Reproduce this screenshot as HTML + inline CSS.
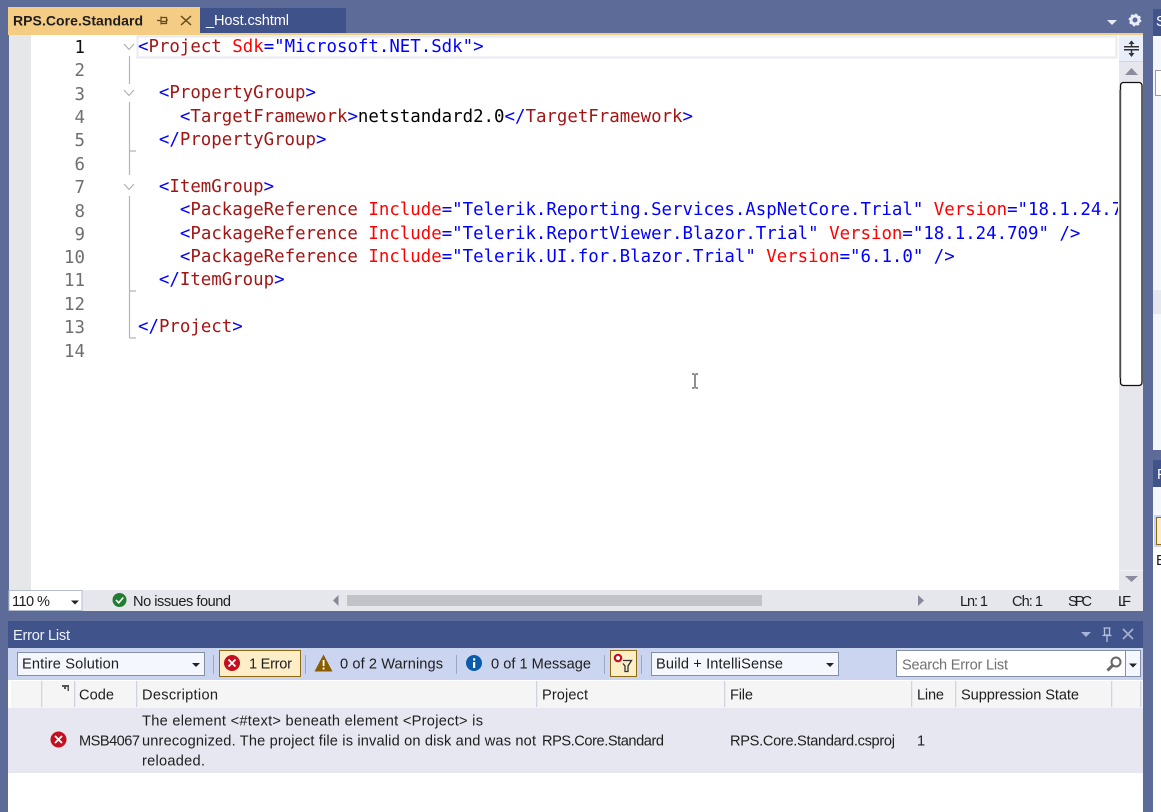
<!DOCTYPE html>
<html><head><meta charset="utf-8"><style>
html,body{margin:0;padding:0;width:1161px;height:812px;overflow:hidden;background:#5d6b99}
svg{display:block}
.u{font-family:"Liberation Sans",sans-serif;font-size:14.6px;fill:#1e1e1e}
.c{font-family:"DejaVu Sans Mono",monospace;font-size:17.4px;white-space:pre;fill:#0000ff}
.n{font-family:"DejaVu Sans Mono",monospace;font-size:17.4px;fill:#6f6f6f;text-anchor:end}
.e{fill:#a31515}.a{fill:#ff0000}.k{fill:#000}
</style></head><body>
<svg width="1161" height="812" viewBox="0 0 1161 812" xmlns="http://www.w3.org/2000/svg">
<defs><clipPath id="cl"><rect x="137" y="36" width="981" height="550"/></clipPath></defs>
<rect width="1161" height="812" fill="#5d6b99"/>
<!-- tabs -->
<rect x="8" y="7" width="192" height="28" fill="#f5cc84"/>
<rect x="200" y="8" width="146" height="25" fill="#40528a"/>
<rect x="8" y="33" width="1135" height="2" fill="#f5cc84"/>
<text class="u" x="13" y="25.500" style="font-weight:bold;font-size:14px" textLength="130" lengthAdjust="spacing">RPS.Core.Standard</text>
<g stroke="#5f4a1e" fill="none" stroke-width="1.200"><path d="M157 20.500H161M161 16.500V24.500M161 17.500H166.500V23.500H161M161 21.500H166.500M166.500 20H168"/></g>
<path d="M181 16L191 25M191 16L181 25" stroke="#5f4a1e" stroke-width="1.500" fill="none"/>
<text class="u" x="206" y="25" style="fill:#fff" textLength="83" lengthAdjust="spacing">_Host.cshtml</text>
<path d="M1107 20H1117L1112 25Z" fill="#e8ecf8"/>
<circle cx="1135" cy="20" r="4" fill="none" stroke="#e8ecf8" stroke-width="3"/>
<circle cx="1135" cy="20" r="5.600" fill="none" stroke="#e8ecf8" stroke-width="1.600" stroke-dasharray="2 2.400"/>
<!-- editor -->
<rect x="9" y="35" width="1134" height="555" fill="#fff"/>
<rect x="9" y="35" width="22" height="555" fill="#e6e7e8"/>
<rect x="137.500" y="36.500" width="979" height="21" fill="none" stroke="#eaeaf2" stroke-width="2"/>
<!-- line numbers -->
<text class="n" x="85" y="53" style="fill:#111">1</text>
<text class="n" x="85" y="76">2</text><text class="n" x="85" y="100">3</text><text class="n" x="85" y="123">4</text>
<text class="n" x="85" y="146">5</text><text class="n" x="85" y="170">6</text><text class="n" x="85" y="193">7</text>
<text class="n" x="85" y="217">8</text><text class="n" x="85" y="240">9</text><text class="n" x="85" y="263">10</text>
<text class="n" x="85" y="286">11</text><text class="n" x="85" y="310">12</text><text class="n" x="85" y="333">13</text><text class="n" x="85" y="357">14</text>
<!-- folding -->
<g fill="none" stroke="#a9a9a9" stroke-width="1">
<path d="M124 44L129 49.500L134 44M124 90L129 95.500L134 90M124 184L129 189.500L134 184"/>
<path d="M129.500 56V84M129.500 102V175M129.500 151H136M129.500 196V338M129.500 291H136M129.500 338H136" stroke="#b4b4b4" stroke-width="1.200"/>
</g>
<!-- code -->
<g clip-path="url(#cl)">
<text class="c" x="138" y="52">&lt;<tspan class="e">Project</tspan> <tspan class="a">Sdk</tspan>="Microsoft.NET.Sdk"&gt;</text>
<text class="c" x="158.900" y="98">&lt;<tspan class="e">PropertyGroup</tspan>&gt;</text>
<text class="c" x="179.900" y="122">&lt;<tspan class="e">TargetFramework</tspan>&gt;<tspan class="k">netstandard2.0</tspan>&lt;/<tspan class="e">TargetFramework</tspan>&gt;</text>
<text class="c" x="158.900" y="145">&lt;/<tspan class="e">PropertyGroup</tspan>&gt;</text>
<text class="c" x="158.900" y="192">&lt;<tspan class="e">ItemGroup</tspan>&gt;</text>
<text class="c" x="179.900" y="215">&lt;<tspan class="e">PackageReference</tspan> <tspan class="a">Include</tspan>="Telerik.Reporting.Services.AspNetCore.Trial" <tspan class="a">Version</tspan>="18.1.24.709" /&gt;</text>
<text class="c" x="179.900" y="239">&lt;<tspan class="e">PackageReference</tspan> <tspan class="a">Include</tspan>="Telerik.ReportViewer.Blazor.Trial" <tspan class="a">Version</tspan>="18.1.24.709" /&gt;</text>
<text class="c" x="179.900" y="262">&lt;<tspan class="e">PackageReference</tspan> <tspan class="a">Include</tspan>="Telerik.UI.for.Blazor.Trial" <tspan class="a">Version</tspan>="6.1.0" /&gt;</text>
<text class="c" x="158.900" y="285">&lt;/<tspan class="e">ItemGroup</tspan>&gt;</text>
<text class="c" x="138" y="332">&lt;/<tspan class="e">Project</tspan>&gt;</text>
</g>
<!-- I-beam -->
<path d="M692 374H694.500M695.500 374H698M695 374.500V387.500M692 388H694.500M695.500 388H698" stroke="#222" stroke-width="1" fill="none"/>
<!-- vertical scrollbar -->
<rect x="1119" y="35" width="24" height="555" fill="#e6e6ed"/>
<rect x="1119" y="35" width="24" height="27" fill="#e9eefb"/>
<rect x="1119" y="61" width="24" height="1" fill="#ccd5ee"/>
<rect x="1124" y="46" width="15" height="1.500" fill="#333"/>
<rect x="1124" y="49" width="15" height="1.500" fill="#333"/>
<path d="M1131.500 41V46M1131.500 50V56" stroke="#333" stroke-width="1.500"/>
<path d="M1128.500 44L1131.500 40.500L1134.500 44ZM1128.500 53L1131.500 57L1134.500 53Z" fill="#333"/>
<path d="M1125 75L1131.500 68L1138 75Z" fill="#8a8c9e"/>
<rect x="1120.500" y="82.500" width="21.500" height="303" rx="3" fill="#fff" stroke="#111" stroke-width="1.300"/>
<rect x="1119" y="90" width="1.500" height="288" fill="#888"/>
<rect x="1119" y="570" width="24" height="1" fill="#f4f4f8"/>
<path d="M1125 576L1131.500 582L1138 576Z" fill="#8a8c9e"/>
<!-- status bar -->
<rect x="9" y="590" width="1134" height="21" fill="#e6e7ed"/>
<rect x="9" y="590.500" width="73" height="20" fill="#fff" stroke="#b4bcd2"/>
<text class="u" x="12" y="606" textLength="38" lengthAdjust="spacing">110 %</text>
<path d="M71 600.500H79L75 604.500Z" fill="#222"/>
<circle cx="119.500" cy="600" r="7" fill="#217d2f"/>
<path d="M116 600L118.700 602.800L123.300 597.500" stroke="#fff" stroke-width="1.600" fill="none"/>
<text class="u" x="133" y="606" textLength="98" lengthAdjust="spacing">No issues found</text>
<path d="M338.500 595V606L333 600.500Z" fill="#868999"/>
<rect x="347" y="595" width="415" height="11" fill="#c2c3c9"/>
<path d="M918 595V606L924 600.500Z" fill="#868999"/>
<text class="u" x="960" y="606" textLength="28" lengthAdjust="spacing">Ln: 1</text>
<text class="u" x="1012" y="606" textLength="31" lengthAdjust="spacing">Ch: 1</text>
<text class="u" x="1068" y="606" textLength="24" lengthAdjust="spacing">SPC</text>
<text class="u" x="1118" y="606" textLength="13" lengthAdjust="spacing">LF</text>
<!-- error list -->
<rect x="8" y="621" width="1135" height="191" fill="#fff"/>
<rect x="8" y="621" width="1135" height="27" fill="#40548b"/>
<text class="u" x="13" y="640" style="fill:#f0f2fa" textLength="57" lengthAdjust="spacing">Error List</text>
<path d="M1081 632H1091L1086 637Z" fill="#a9b4d4"/>
<path d="M1103.500 628H1110.500M1104.500 628V635H1109.500V628M1102.500 635.500H1111.500M1107 636V642" stroke="#b5bfdb" stroke-width="1.300" fill="none"/>
<path d="M1123 629L1133 639M1133 629L1123 639" stroke="#a9b4d4" stroke-width="1.600"/>
<rect x="8" y="648" width="1135" height="32" fill="#ccd5f0"/>
<rect x="17.500" y="652.500" width="187" height="23" fill="#f5f7fe" stroke="#8490a8"/>
<text class="u" x="22" y="668.500" textLength="97" lengthAdjust="spacing">Entire Solution</text>
<path d="M192 663H200L196 667Z" fill="#222"/>
<rect x="213" y="655" width="1" height="19" fill="#9aa8c8"/>
<rect x="219.500" y="650.500" width="81" height="26" fill="#fdeec8" stroke="#8f6a12"/>
<circle cx="232" cy="663" r="8" fill="#c50f1f"/>
<path d="M228.500 659.500L235.500 666.500M235.500 659.500L228.500 666.500" stroke="#fff" stroke-width="1.800"/>
<text class="u" x="249" y="668.500" textLength="43" lengthAdjust="spacing">1 Error</text>
<rect x="305" y="655" width="1" height="19" fill="#9aa8c8"/>
<path d="M323.500 654.500L332.500 671.500H314.500Z" fill="#8a5d00"/>
<rect x="322.700" y="660" width="1.800" height="6" fill="#fff"/><rect x="322.700" y="667.500" width="1.800" height="2" fill="#fff"/>
<text class="u" x="340" y="668.500" textLength="103" lengthAdjust="spacing">0 of 2 Warnings</text>
<rect x="456" y="655" width="1" height="19" fill="#9aa8c8"/>
<circle cx="474" cy="663" r="8" fill="#0a5bab"/>
<rect x="473" y="662" width="2.200" height="6" fill="#fff"/><rect x="473" y="658.300" width="2.200" height="2.200" fill="#fff"/>
<text class="u" x="491" y="668.500" textLength="100" lengthAdjust="spacing">0 of 1 Message</text>
<rect x="604" y="655" width="1" height="19" fill="#9aa8c8"/>
<rect x="610.500" y="650.500" width="26" height="26" fill="#fdeec8" stroke="#8f6a12"/>
<circle cx="618" cy="658" r="3.200" fill="#fff" stroke="#c50f1f" stroke-width="2.200"/>
<path d="M623 660.500H631.500L628 666V671.500H625V666L623 663.500" stroke="#333" stroke-width="1.300" fill="none"/>
<rect x="641" y="655" width="1" height="19" fill="#9aa8c8"/>
<rect x="651.500" y="652.500" width="187" height="23" fill="#f5f7fe" stroke="#8490a8"/>
<text class="u" x="656" y="668.500" textLength="127" lengthAdjust="spacing">Build + IntelliSense</text>
<path d="M826 663H834L830 667Z" fill="#222"/>
<rect x="896.500" y="650.500" width="244" height="26" fill="#fff" stroke="#8490a8"/>
<rect x="1125.500" y="650.500" width="15" height="26" fill="#f5f7fe" stroke="#8490a8"/>
<text class="u" x="902" y="669.500" style="fill:#717171" textLength="106" lengthAdjust="spacing">Search Error List</text>
<circle cx="1116" cy="662" r="4.500" fill="none" stroke="#666" stroke-width="2"/>
<path d="M1112.500 665.500L1107.500 670.500" stroke="#666" stroke-width="3"/>
<path d="M1129 663.500H1137L1133 667.500Z" fill="#222"/>
<!-- table header -->
<rect x="11" y="681" width="1132" height="27" fill="#f5f5f5"/>
<g fill="#d0d3e2">
<rect x="41" y="681" width="1.300" height="26"/><rect x="74" y="681" width="1.300" height="26"/>
<rect x="136" y="681" width="1.300" height="26"/><rect x="536" y="681" width="1.300" height="26"/>
<rect x="724" y="681" width="1.300" height="26"/><rect x="911" y="681" width="1.300" height="26"/>
<rect x="955" y="681" width="1.300" height="26"/><rect x="1111" y="681" width="1.300" height="26"/>
<rect x="1140" y="681" width="1.300" height="26"/>
</g>
<path d="M62 685H69V691H67.500V687H66V689H64V687H62Z" fill="#555"/>
<text class="u" x="79" y="699.500" textLength="35" lengthAdjust="spacing">Code</text>
<text class="u" x="142" y="699.500" textLength="76" lengthAdjust="spacing">Description</text>
<text class="u" x="542" y="699.500" textLength="46" lengthAdjust="spacing">Project</text>
<text class="u" x="730" y="699.500" textLength="23" lengthAdjust="spacing">File</text>
<text class="u" x="917" y="699.500" textLength="27" lengthAdjust="spacing">Line</text>
<text class="u" x="961" y="699.500" textLength="118" lengthAdjust="spacing">Suppression State</text>
<!-- row -->
<rect x="8" y="708" width="1135" height="65" fill="#e6e7f0"/>
<circle cx="58.500" cy="739.500" r="8" fill="#c50f1f"/>
<path d="M55 736L62 743M62 736L55 743" stroke="#fff" stroke-width="1.800"/>
<text class="u" x="79" y="745.500" textLength="61" lengthAdjust="spacing">MSB4067</text>
<text class="u" x="142" y="725.500" textLength="341" lengthAdjust="spacing">The element &lt;#text&gt; beneath element &lt;Project&gt; is</text>
<text class="u" x="142" y="745.500" textLength="394" lengthAdjust="spacing">unrecognized. The project file is invalid on disk and was not</text>
<text class="u" x="142" y="765.500" textLength="63" lengthAdjust="spacing">reloaded.</text>
<text class="u" x="542" y="745.500" textLength="122" lengthAdjust="spacing">RPS.Core.Standard</text>
<text class="u" x="730" y="745.500" textLength="165" lengthAdjust="spacing">RPS.Core.Standard.csproj</text>
<text class="u" x="917" y="745.500" textLength="8" lengthAdjust="spacing">1</text>
<!-- right panels -->
<rect x="1153" y="9" width="8" height="441" fill="#f5f7fe"/>
<rect x="1153" y="9" width="8" height="27" fill="#40548b"/>
<text class="u" x="1156" y="26" style="fill:#fff">S</text>
<rect x="1155.500" y="70.500" width="8" height="25" fill="#fff" stroke="#9a9a9a"/>
<rect x="1153" y="290" width="8" height="24" fill="#e6e7f0"/>
<rect x="1153" y="460" width="8" height="352" fill="#fff"/>
<rect x="1153" y="460" width="8" height="27" fill="#40548b"/>
<text class="u" x="1157" y="479" style="fill:#fff">P</text>
<rect x="1153" y="487" width="8" height="28" fill="#f5f7fe"/>
<rect x="1154" y="515" width="7" height="32" fill="#ccd5f0"/>
<rect x="1156.500" y="517.500" width="6" height="27" fill="#fdeec8" stroke="#8f6a12"/>
<text class="u" x="1156" y="565">E</text>
</svg>
</body></html>
